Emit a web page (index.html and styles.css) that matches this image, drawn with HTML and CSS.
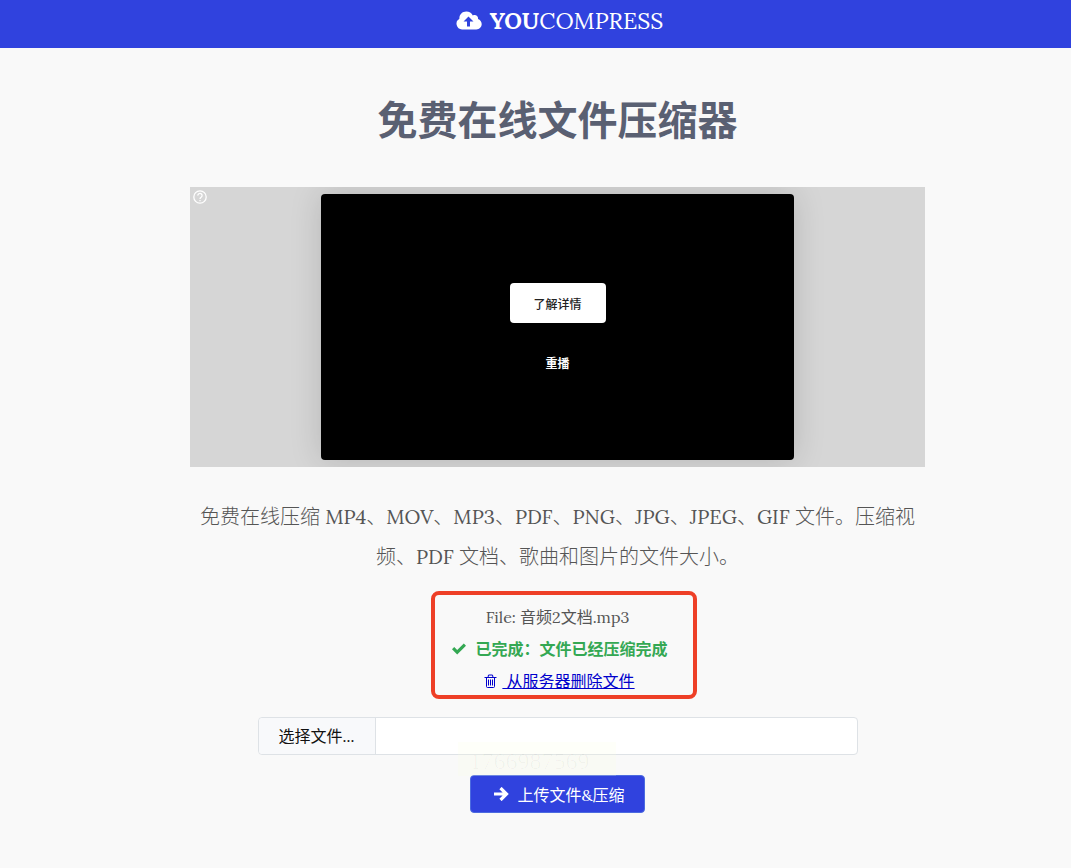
FILE: index.html
```html
<!DOCTYPE html>
<html lang="zh-CN">
<head>
<meta charset="UTF-8">
<meta name="viewport" content="width=device-width, initial-scale=1">
<title>免费在线文件压缩器 - YouCompress</title>
<link rel="stylesheet" href="styles.css">
</head>
<body>
<header class="header">
    <a class="logo" href="#">
        <svg class="logo-icon" viewBox="0 0 26 19" aria-hidden="true">
            <path fill="#fff" d="M6 18.500A5.800 5.800 0 0 1 3.400 7.700C3.200 3.500 6.200.500 10.300.500c3 0 5.300 1.500 6.500 3.900 2.700-1.500 5.800.500 5.200 3.500 2.200.7 3.700 2.700 3.700 5.200 0 3.100-2.300 5.400-5.400 5.400z"/>
            <path fill="#3042de" d="M12.500 5.500L7.500 10.600H11V15.500h3v-4.900h3.500z"/>
        </svg>
        <span><b>YOU</b>COMPRESS</span>
    </a>
</header>
<main class="container">
    <h1>免费在线文件压缩器</h1>
    <!-- 广告 -->
    <div class="ad">
        <svg class="ad-help" viewBox="0 0 14 14" fill="none" stroke="#fff" aria-hidden="true">
            <circle cx="7" cy="7" r="6.200" stroke-width="1.300"/>
            <path d="M4.900 5.600a2.100 2.100 0 1 1 3.400 1.500C7.500 7.700 7 8 7 9M7 9.900v1.400" stroke-width="1.300"/>
        </svg>
        <div class="ad-player">
            <button type="button" class="ad-more">了解详情</button>
            <button type="button" class="ad-replay">重播</button>
        </div>
    </div>
    <p class="intro">免费在线压缩 MP4、MOV、MP3、PDF、PNG、JPG、JPEG、GIF 文件。压缩视<br>频、PDF 文档、歌曲和图片的文件大小。</p>
    <div class="result">
        <div>File: 音频2文档.mp3</div>
        <div class="done">
            <svg class="check" viewBox="0 0 16 12" aria-hidden="true"><path fill="#34a853" d="M1 6.200L3.200 4l3 3L12.800.500 15 2.700 6.200 11.500z"/></svg>
            <span>已完成：文件已经压缩完成</span>
        </div>
        <a class="delete" href="#">
            <svg class="trash" viewBox="0 0 13 14" fill="none" stroke="#0000cc" aria-hidden="true"><path d="M.500 3.500h12M4 3.500L4.500 1h4l.500 2.500M2.500 3.500v9q0 1 1 1h6q1 0 1-1v-9M4.500 5.500v6M6.500 5.500v6M8.500 5.500v6"/></svg>
            <span>&nbsp;从服务器删除文件</span>
        </a>
    </div>
    <form class="upload">
        <div class="picker">
            <label for="file">选择文件...</label>
            <input class="file" id="file" type="file">
            <input class="filename" type="text" aria-label="文件名" readonly>
            <span class="stamp">1766987569</span>
        </div>
        <button type="submit" class="submit">
            <svg class="arrow" viewBox="0 0 15 14" fill="none" stroke="#fff" stroke-width="3.200" aria-hidden="true"><path d="M0 7h12M6.500 1l6 6-6 6"/></svg>
            上传文件&amp;压缩
        </button>
    </form>
</main>
</body>
</html>
```
FILE: styles.css
```css
* {
    box-sizing: border-box;
}
body {
    margin: 0;
    background: #f9f9f9;
    color: #555;
    font-family: Lora, "Liberation Serif", "Noto Sans CJK SC", serif;
    font-size: 16px;
}
button, input {
    font-family: inherit;
}
.header {
    display: flex;
    justify-content: center;
    height: 48px;
    padding-left: 48px;
    background: #3042de;
}
.logo {
    display: flex;
    align-items: center;
    gap: 8px;
    height: 40px;
    color: #fff;
    font-size: 23px;
    text-decoration: none;
}
.logo-icon {
    width: 26px;
    height: 19px;
}
.container {
    display: flex;
    flex-direction: column;
    align-items: center;
    padding-left: 44px;
    text-align: center;
}
h1 {
    margin: 43px 0 36px;
    color: #5a6072;
    font-size: 40px;
    line-height: 60px;
}
.ad {
    position: relative;
    display: flex;
    justify-content: center;
    align-items: center;
    width: 100%;
    max-width: 735px;
    height: 280px;
    overflow: hidden;
    background: #d6d6d6;
}
.ad-help {
    position: absolute;
    top: 3px;
    left: 3px;
    width: 14px;
    height: 14px;
}
.ad-player {
    display: flex;
    flex-direction: column;
    align-items: center;
    gap: 33px;
    width: 473px;
    height: 266px;
    padding-top: 89px;
    border-radius: 4px;
    background: #000;
    box-shadow: 0 0 32px rgba(0, 0, 0, 0.15);
}
.ad-more {
    width: 96px;
    height: 40px;
    border: 0;
    border-radius: 4px;
    background: #fff;
    color: #222;
    font-size: 12px;
    font-weight: 500;
}
.ad-replay {
    padding: 0;
    border: 0;
    background: none;
    color: #fff;
    font-size: 12px;
    font-weight: bold;
    line-height: 16px;
}
.intro {
    max-width: 735px;
    margin: 30px 0 14px;
    font-size: 20px;
    font-weight: 300;
    line-height: 40px;
}
/* 压缩结果 */
.result {
    display: flex;
    flex-direction: column;
    align-items: center;
    gap: 4px;
    width: 266px;
    margin-left: 13px;
    padding: 8px 13px 0 0;
    border: 4px solid #ee3f27;
    border-radius: 8px;
    line-height: 28px;
}
.done, .delete {
    display: flex;
    align-items: center;
    padding-left: 4px;
}
.done {
    gap: 8px;
    color: #34a853;
    font-weight: bold;
}
.check {
    width: 16px;
    height: 12px;
}
.delete {
    gap: 5px;
    color: #0000cc;
    text-decoration: none;
}
.delete span {
    text-decoration: underline;
}
.trash {
    width: 13px;
    height: 14px;
}
.upload {
    display: flex;
    flex-direction: column;
    align-items: center;
    gap: 20px;
    width: 100%;
    margin-top: 18px;
}
.picker {
    position: relative;
    display: flex;
    width: 100%;
    max-width: 600px;
    height: 38px;
    border: 1px solid #dee2e6;
    border-radius: 4px;
    background: #fff;
}
.picker label {
    width: 117px;
    border-right: 1px solid #dee2e6;
    border-radius: 4px 0 0 4px;
    background: #f8f9fb;
    color: #111;
    line-height: 36px;
}
.file {
    position: absolute;
    width: 1px;
    height: 1px;
    opacity: 0;
}
.filename {
    flex: 1;
    border: 0;
    background: none;
    font-size: 16px;
}
.stamp {
    position: absolute;
    top: 24px;
    left: 199px;
    width: 158px;
    height: 34px;
    padding-left: 12px;
    background: rgba(250, 255, 225, 0.2);
    color: rgba(0, 0, 0, 0.03);
    font-family: "Liberation Serif", serif;
    font-size: 24px;
    line-height: 38px;
    text-align: left;
    pointer-events: none;
}
.submit {
    display: flex;
    justify-content: center;
    align-items: center;
    gap: 8px;
    width: 175px;
    height: 38px;
    padding: 0 0 0 4px;
    border: 1px solid #4c6be0;
    border-radius: 4px;
    background: #3042de;
    color: #fff;
    font-size: 16px;
}
.arrow {
    width: 15px;
    height: 14px;
}
```
